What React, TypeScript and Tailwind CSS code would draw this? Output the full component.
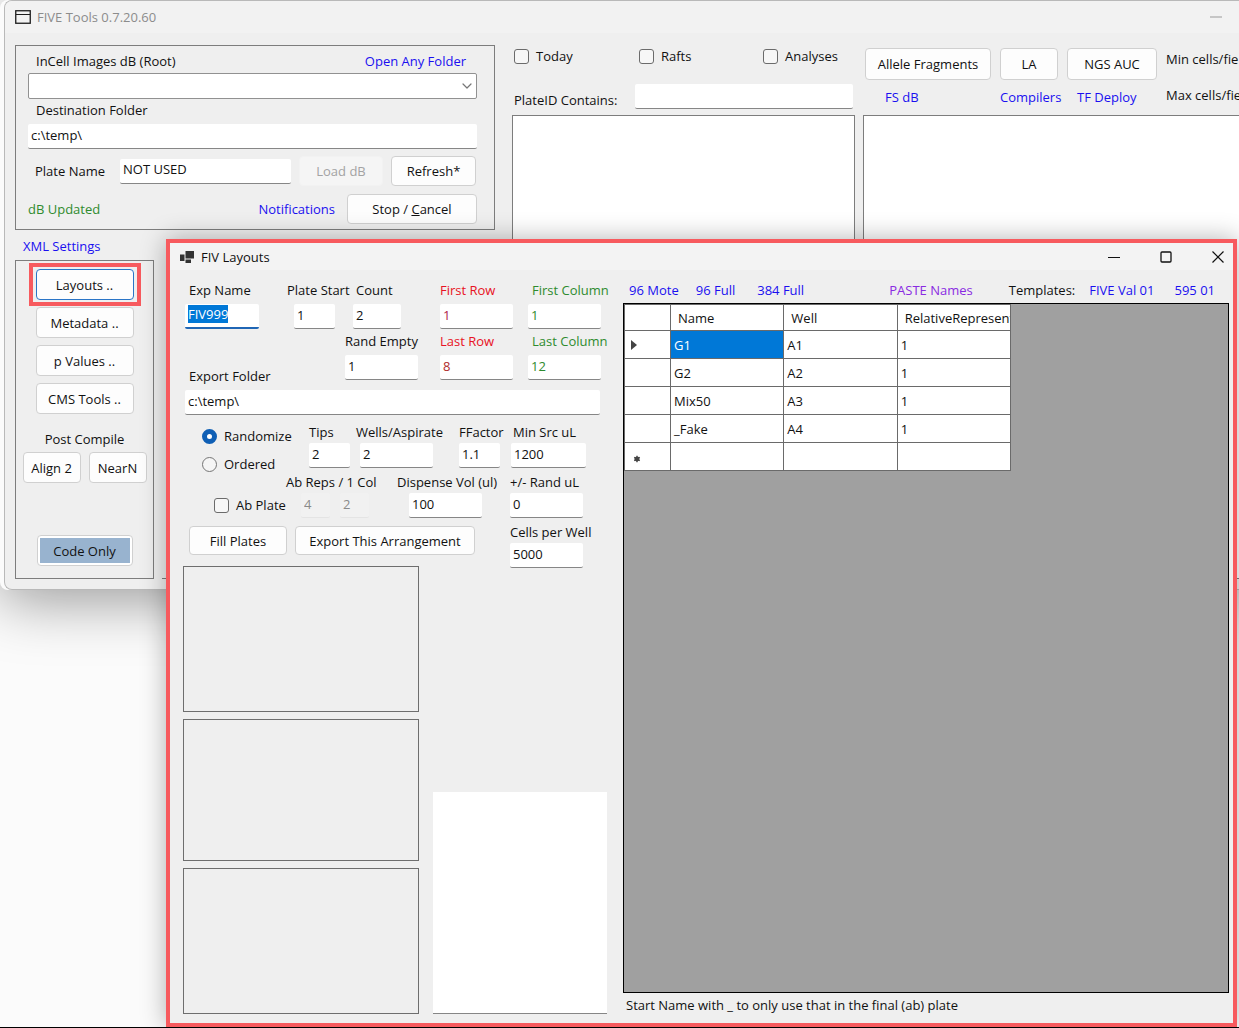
import { useEffect, useRef } from "react";
import type { ReactNode } from "react";
import { ChevronDown } from "lucide-react";
import clsx from "clsx";

const wells = [
  { name: "G1", well: "A1", rel: "1" },
  { name: "G2", well: "A2", rel: "1" },
  { name: "Mix50", well: "A3", rel: "1" },
  { name: "_Fake", well: "A4", rel: "1" },
];

const input =
  "block h-[25px] rounded-xs border-b border-[#868686] bg-white px-[3px] pb-[3px] leading-[18px] outline-none disabled:border-[#e4e4e4] disabled:bg-[#f1f1f1] disabled:text-[#8a8a8a]";

function Button({ children, className, disabled }: { children: ReactNode; className?: string; disabled?: boolean }) {
  return (
    <button
      disabled={disabled}
      className={clsx(
        "shrink-0 whitespace-nowrap rounded-[4px] border text-center leading-[18px]",
        disabled ? "border-[#f2f2f2] bg-[#f5f5f5] text-[#a3a3a3]" : "border-[#d0d0d0] bg-[#fdfdfd]",
        className,
      )}
    >
      {children}
    </button>
  );
}

function Link({ children, className, color = "text-[#1a0ff0]" }: { children: ReactNode; className?: string; color?: string }) {
  return (
    <a href="#" className={clsx("whitespace-nowrap", color, className)}>
      {children}
    </a>
  );
}

function Check({ label, className }: { label: string; className?: string }) {
  return (
    <label className={clsx("flex items-center gap-[7px]", className)}>
      <input
        type="checkbox"
        className="size-[15px] shrink-0 appearance-none rounded-[3px] border border-[#6b6b6b] bg-[#f7f7f7]"
      />
      {label}
    </label>
  );
}

type FieldProps = {
  id: string;
  label: string;
  value: string;
  tight?: boolean;
  className?: string;
  labelClass?: string;
  inputClass: string;
};

// label on top, underlined text box below
function Field({ id, label, value, tight, className, labelClass, inputClass }: FieldProps) {
  return (
    <div className={clsx("shrink-0", className)}>
      <label htmlFor={id} className={clsx("block whitespace-nowrap", tight ? "mb-[2px]" : "mb-[5px]", labelClass)}>
        {label}
      </label>
      <input id={id} type="text" defaultValue={value} className={clsx(input, inputClass)} />
    </div>
  );
}

function DatabasePanel() {
  return (
    <div className="h-[185px] border border-[#7d7d7d] pl-3 pr-[17px] pt-[6px]">
      <div className="flex justify-between pl-2 pr-[11px]">
        <label htmlFor="root">InCell Images dB (Root)</label>
        <Link>Open Any Folder</Link>
      </div>
      <div className="relative mt-[3px]">
        <select id="root" className="block h-[26px] w-full appearance-none rounded-xs border border-[#919191] bg-white" />
        <ChevronDown className="pointer-events-none absolute right-[2px] top-[5px] size-4 text-[#777]" strokeWidth={1.8} />
      </div>
      <label htmlFor="dest" className="mt-[2px] block pl-2">Destination Folder</label>
      <input id="dest" type="text" defaultValue="c:\temp\" className={clsx(input, "mt-[5px] w-full")} />
      <div className="mt-[7px] flex items-center">
        <label htmlFor="plate" className="w-[92px] pl-[7px]">Plate Name</label>
        <input id="plate" type="text" defaultValue="NOT USED" className={clsx(input, "w-[171px]")} />
        <Button disabled className="ml-2 h-[30px] w-[84px]">Load dB</Button>
        <Button className="ml-2 h-[30px] w-[85px]">Refresh*</Button>
      </div>
      <div className="mt-2 flex items-center">
        <span className="text-[#2e8b2e]">dB Updated</span>
        <Link className="ml-auto mr-3">Notifications</Link>
        <Button className="h-[30px] w-[130px]">
          Stop / <span className="underline">C</span>ancel
        </Button>
      </div>
    </div>
  );
}

function XmlPanel() {
  return (
    <div className="flex h-[319px] w-[139px] flex-col items-center border border-[#7d7d7d] pt-2">
      <div className="flex flex-col gap-[7px]">
        <div className="relative">
          <Button className="h-[31px] w-[98px] border-[#2a75c7]!">Layouts ..</Button>
          {/* highlight frame */}
          <span className="pointer-events-none absolute -inset-x-[7px] -inset-y-[6px] border-4 border-[#f75a5e]" />
        </div>
        <Button className="h-[31px] w-[98px]">Metadata ..</Button>
        <Button className="h-[31px] w-[98px]">p Values ..</Button>
        <Button className="h-[31px] w-[98px]">CMS Tools ..</Button>
      </div>
      <div className="mt-4">Post Compile</div>
      <div className="mt-1 flex gap-2">
        <Button className="h-[31px] w-[58px]">Align 2</Button>
        <Button className="h-[31px] w-[58px]">NearN</Button>
      </div>
      <Button className="mt-[52px] h-[31px] w-24 bg-white p-[2px]">
        <span className="flex h-full items-center justify-center bg-[#98b3cf]">Code Only</span>
      </Button>
    </div>
  );
}

function MainWindow() {
  return (
    <div className="ml-1 overflow-hidden rounded-l-lg border border-r-0 border-[#b9b9b9] bg-[#efefef]">
      <div className="flex h-8 items-center bg-[#f2f2f2] pl-[10px] pr-[17px] text-[#8c8c8c]">
        <svg width="16" height="14" viewBox="0 0 16 14" className="mr-[6px]" fill="none" stroke="#1c1c1c">
          <rect x="0.75" y="0.75" width="14.5" height="12.5" strokeWidth="1.3" />
          <path d="M1 4.5h14" strokeWidth="1.2" />
        </svg>
        FIVE Tools 0.7.20.60
        <svg width="12" height="2" viewBox="0 0 12 2" className="ml-auto">
          <path d="M0 1h12" stroke="#9a9a9a" />
        </svg>
      </div>
      <div className="flex gap-[17px] pb-[10px] pl-[10px] pt-3">
        <div className="w-[480px] shrink-0">
          <DatabasePanel />
          <div className="mb-[5px] mt-[7px] pl-2">
            <Link>XML Settings</Link>
          </div>
          <div className="flex gap-2">
            <XmlPanel />
            <div className="flex-1 border-b border-[#7d7d7d]" />
          </div>
        </div>

        <div className="flex w-[343px] shrink-0 flex-col">
          <div className="flex pl-[2px] pt-[2px]">
            <Check label="Today" className="w-[125px]" />
            <Check label="Rafts" className="w-[124px]" />
            <Check label="Analyses" />
          </div>
          <div className="mt-[18px] flex items-center pl-[2px]">
            <label htmlFor="plateId" className="w-[121px] pt-2">PlateID Contains:</label>
            <input id="plateId" type="text" className={clsx(input, "w-[218px]")} />
          </div>
          <div className="mt-[6px] flex-1 border border-[#7d7d7d] bg-white" />
        </div>

        <div className="-ml-[9px] flex min-w-0 flex-1 flex-col">
          <div className="grid grid-cols-[126px_58px_90px_auto] gap-x-[9px] overflow-hidden whitespace-nowrap pl-[2px] pt-[3px]">
            <Button className="h-8">Allele Fragments</Button>
            <Button className="h-8">LA</Button>
            <Button className="h-8">NGS AUC</Button>
            <span className="pt-[2px]">Min cells/fie</span>
            <Link className="mt-2 pl-5">FS dB</Link>
            <Link className="mt-2">Compilers</Link>
            <Link className="mt-2 pl-[10px]">TF Deploy</Link>
            <span className="mt-[6px]">Max cells/fie</span>
          </div>
          <div className="mt-[9px] flex-1 border border-r-0 border-[#7d7d7d] bg-white" />
        </div>
      </div>
    </div>
  );
}

function WellTable() {
  const cell = "border border-[#6a6a6a] bg-white px-[3px] text-left font-normal";
  return (
    <table className="w-[387px] table-fixed border-collapse">
      <colgroup>
        <col className="w-[46px]" />
        <col />
        <col />
        <col />
      </colgroup>
      <thead>
        <tr className="h-[26px]">
          <th className={cell} />
          <th className={clsx(cell, "pl-[7px]!")}>Name</th>
          <th className={clsx(cell, "pl-[7px]!")}>Well</th>
          <th className={clsx(cell, "overflow-hidden pl-[7px]! pr-0!")}>RelativeRepresent</th>
        </tr>
      </thead>
      <tbody>
        {wells.map((w, i) => (
          <tr key={w.name} className="h-7">
            <td className={cell}>
              {i === 0 && (
                <svg width="6" height="10" viewBox="0 0 6 10" className="ml-[3px]">
                  <path d="M0 0l6 5-6 5z" fill="#444" />
                </svg>
              )}
            </td>
            <td className={i === 0 ? "border border-[#6a6a6a] bg-[#0078d7] px-[3px] text-white" : cell}>{w.name}</td>
            <td className={cell}>{w.well}</td>
            <td className={cell}>{w.rel}</td>
          </tr>
        ))}
        <tr className="h-7">
          <td className={cell}>
            <svg width="8" height="8" viewBox="0 0 8 8" className="ml-[5px] mt-1" stroke="#444" strokeWidth="1.3">
              <path d="M4 .8v6.4M1.2 2.4l5.6 3.2M6.8 2.4L1.2 5.6" />
              <circle cx="4" cy="4" r="1.8" fill="#444" />
            </svg>
          </td>
          <td className={cell} />
          <td className={cell} />
          <td className={cell} />
        </tr>
      </tbody>
    </table>
  );
}

function LayoutForm() {
  const expName = useRef<HTMLInputElement>(null);

  // start with the experiment name selected
  useEffect(() => {
    expName.current?.focus();
    expName.current?.select();
  }, []);

  const radio =
    "size-[15px] shrink-0 appearance-none rounded-full border border-[#757575] bg-[#f5f5f5] checked:border-[5px] checked:border-[#0f5fb5] checked:bg-white";

  return (
    <div className="flex w-[440px] shrink-0 flex-col pl-[15px] pt-[11px]">
      <div className="flex">
        <div className="w-[102px]">
          <label htmlFor="exp" className="mb-[5px] block pl-1">Exp Name</label>
          <input
            id="exp"
            ref={expName}
            type="text"
            defaultValue="FIV999"
            className={clsx(input, "w-[74px] border-b-2 border-[#1f66b5]! selection:bg-[#0078d7] selection:text-white")}
          />
        </div>
        <Field id="start" label="Plate Start" value="1" className="w-[66px]" inputClass="ml-[7px] w-[41px]" />
        <Field id="count" label="Count" value="2" className="w-[87px]" labelClass="pl-[3px]" inputClass="w-12" />
        <Field id="fr" label="First Row" value="1" className="w-[88px] text-[#e81224]" inputClass="w-[73px] text-[#b0204a]" />
        <Field id="fc" label="First Column" value="1" className="text-[#2e8b2e]" labelClass="pl-1" inputClass="w-[73px]" />
      </div>
      <div className="mt-[3px] flex">
        <label htmlFor="export" className="mb-[5px] w-[160px] self-end pl-1">Export Folder</label>
        <Field id="re" label="Rand Empty" value="1" className="mb-[10px] w-[95px]" inputClass="w-[73px]" />
        <Field id="lr" label="Last Row" value="8" className="w-[88px] text-[#e81224]" inputClass="w-[73px] text-[#b02a2a]" />
        <Field id="lc" label="Last Column" value="12" className="text-[#2e8b2e]" labelClass="pl-1" inputClass="w-[73px]" />
      </div>
      <input id="export" type="text" defaultValue="c:\temp\" className={clsx(input, "w-[415px]")} />

      <div className="mt-2 flex">
        <div className="flex w-[124px] flex-col gap-[10px] pl-[17px] pt-1">
          <label className="flex items-center gap-[7px]">
            <input type="radio" name="order" defaultChecked className={radio} />
            Randomize
          </label>
          <label className="flex items-center gap-[7px]">
            <input type="radio" name="order" className={radio} />
            Ordered
          </label>
        </div>
        <Field tight id="tips" label="Tips" value="2" className="w-[47px]" inputClass="w-[41px]" />
        <Field tight id="wells" label="Wells/Aspirate" value="2" className="w-[103px]" inputClass="ml-1 w-[73px]" />
        <Field tight id="ff" label="FFactor" value="1.1" className="w-[52px]" inputClass="w-[41px]" />
        <Field tight id="min" label="Min Src uL" value="1200" labelClass="pl-[2px]" inputClass="w-[75px]" />
      </div>
      <div className="flex">
        <Check label="Ab Plate" className="mb-1 w-[101px] self-end pl-[29px]" />
        <div className="w-[111px]">
          <div className="mb-[2px]">Ab Reps / 1 Col</div>
          <div className="flex gap-[10px] pl-[15px]">
            <input aria-label="Ab reps" disabled defaultValue="4" className={clsx(input, "w-[29px]")} />
            <input aria-label="Ab columns" disabled defaultValue="2" className={clsx(input, "w-[29px]")} />
          </div>
        </div>
        <Field tight id="disp" label="Dispense Vol (ul)" value="100" className="w-[113px]" inputClass="ml-3 w-[73px]" />
        <Field tight id="rand" label="+/- Rand uL" value="0" inputClass="w-[73px]" />
      </div>

      <div className="-ml-[2px] mt-[5px] flex flex-1">
        <div className="flex w-[236px] flex-col gap-[7px]">
          <div className="mb-1 mt-[3px] flex gap-2 pl-[6px]">
            <Button className="h-[29px] w-[98px]">Fill Plates</Button>
            <Button className="h-[29px] w-[180px]">Export This Arrangement</Button>
          </div>
          <div className="flex-[146] border border-[#6e6e6e]" />
          <div className="flex-[141] border border-[#6e6e6e]" />
          <div className="flex-[146] border border-[#6e6e6e]" />
        </div>
        <div className="ml-[14px] flex w-[174px] flex-col justify-between">
          <Field tight id="cells" label="Cells per Well" value="5000" className="pl-[77px]" inputClass="w-[73px]" />
          <textarea
            aria-label="Log"
            className="block h-[222px] w-full resize-none border-b border-[#868686] bg-white outline-none"
          />
        </div>
      </div>
    </div>
  );
}

function LayoutsWindow() {
  return (
    <div className="absolute bottom-0 left-[166px] right-[2px] top-[239px] flex flex-col border-4 border-[#f75a5e] bg-[#efefef] shadow-[0_0_24px_rgba(0,0,0,0.3)]">
      <div className="flex h-[27px] shrink-0 items-center bg-[#f3f3f3] pl-[10px] pr-[9px]">
        <svg width="14" height="12" viewBox="0 0 14 12" className="mr-[7px]" fill="#333">
          <path d="M5.5 0H14v7.5H5.5zM0 3.5h4.5V10H0zM5.5 8.5H11V12H5.5z" />
        </svg>
        FIV Layouts
        <div className="ml-auto flex gap-10 text-[#111]">
          <button aria-label="Minimize">
            <svg width="12" height="12" viewBox="0 0 12 12" stroke="currentColor">
              <path d="M0 6.5h12" />
            </svg>
          </button>
          <button aria-label="Maximize">
            <svg width="12" height="12" viewBox="0 0 12 12" fill="none" stroke="currentColor" strokeWidth="1.3">
              <rect x="1" y="1" width="10" height="10" rx="1" />
            </svg>
          </button>
          <button aria-label="Close">
            <svg width="12" height="12" viewBox="0 0 12 12" stroke="currentColor" strokeWidth="1.2">
              <path d="M.5.5l11 11M11.5.5L.5 11.5" />
            </svg>
          </button>
        </div>
      </div>
      <div className="flex flex-1 pb-[9px]">
        <LayoutForm />
        <div className="ml-[13px] mr-1 flex min-w-0 flex-1 flex-col pt-[11px]">
          <div className="flex pl-[6px] pr-[14px]">
            <Link>96 Mote</Link>
            <Link className="ml-[17px]">96 Full</Link>
            <Link className="ml-[22px]">384 Full</Link>
            <Link className="ml-auto" color="text-[#8a2be2]">PASTE Names</Link>
            <span className="ml-9">Templates:</span>
            <Link className="ml-[14px]">FIVE Val 01</Link>
            <Link className="ml-5">595 01</Link>
          </div>
          <div className="mt-1 flex-1 border border-black bg-[#a0a0a0]">
            <WellTable />
          </div>
          <div className="mt-[3px] pl-[3px]">Start Name with _ to only use that in the final (ab) plate</div>
        </div>
      </div>
    </div>
  );
}

export default function App() {
  return (
    <div className="relative min-h-screen overflow-hidden border-b border-black bg-[#fbfbfb] font-['Open_Sans',sans-serif] text-[13px] leading-[18px] text-[#111]">
      <div className="rounded-l-lg shadow-[0_10px_60px_rgba(0,0,0,0.4)]">
        <MainWindow />
      </div>
      <LayoutsWindow />
    </div>
  );
}
